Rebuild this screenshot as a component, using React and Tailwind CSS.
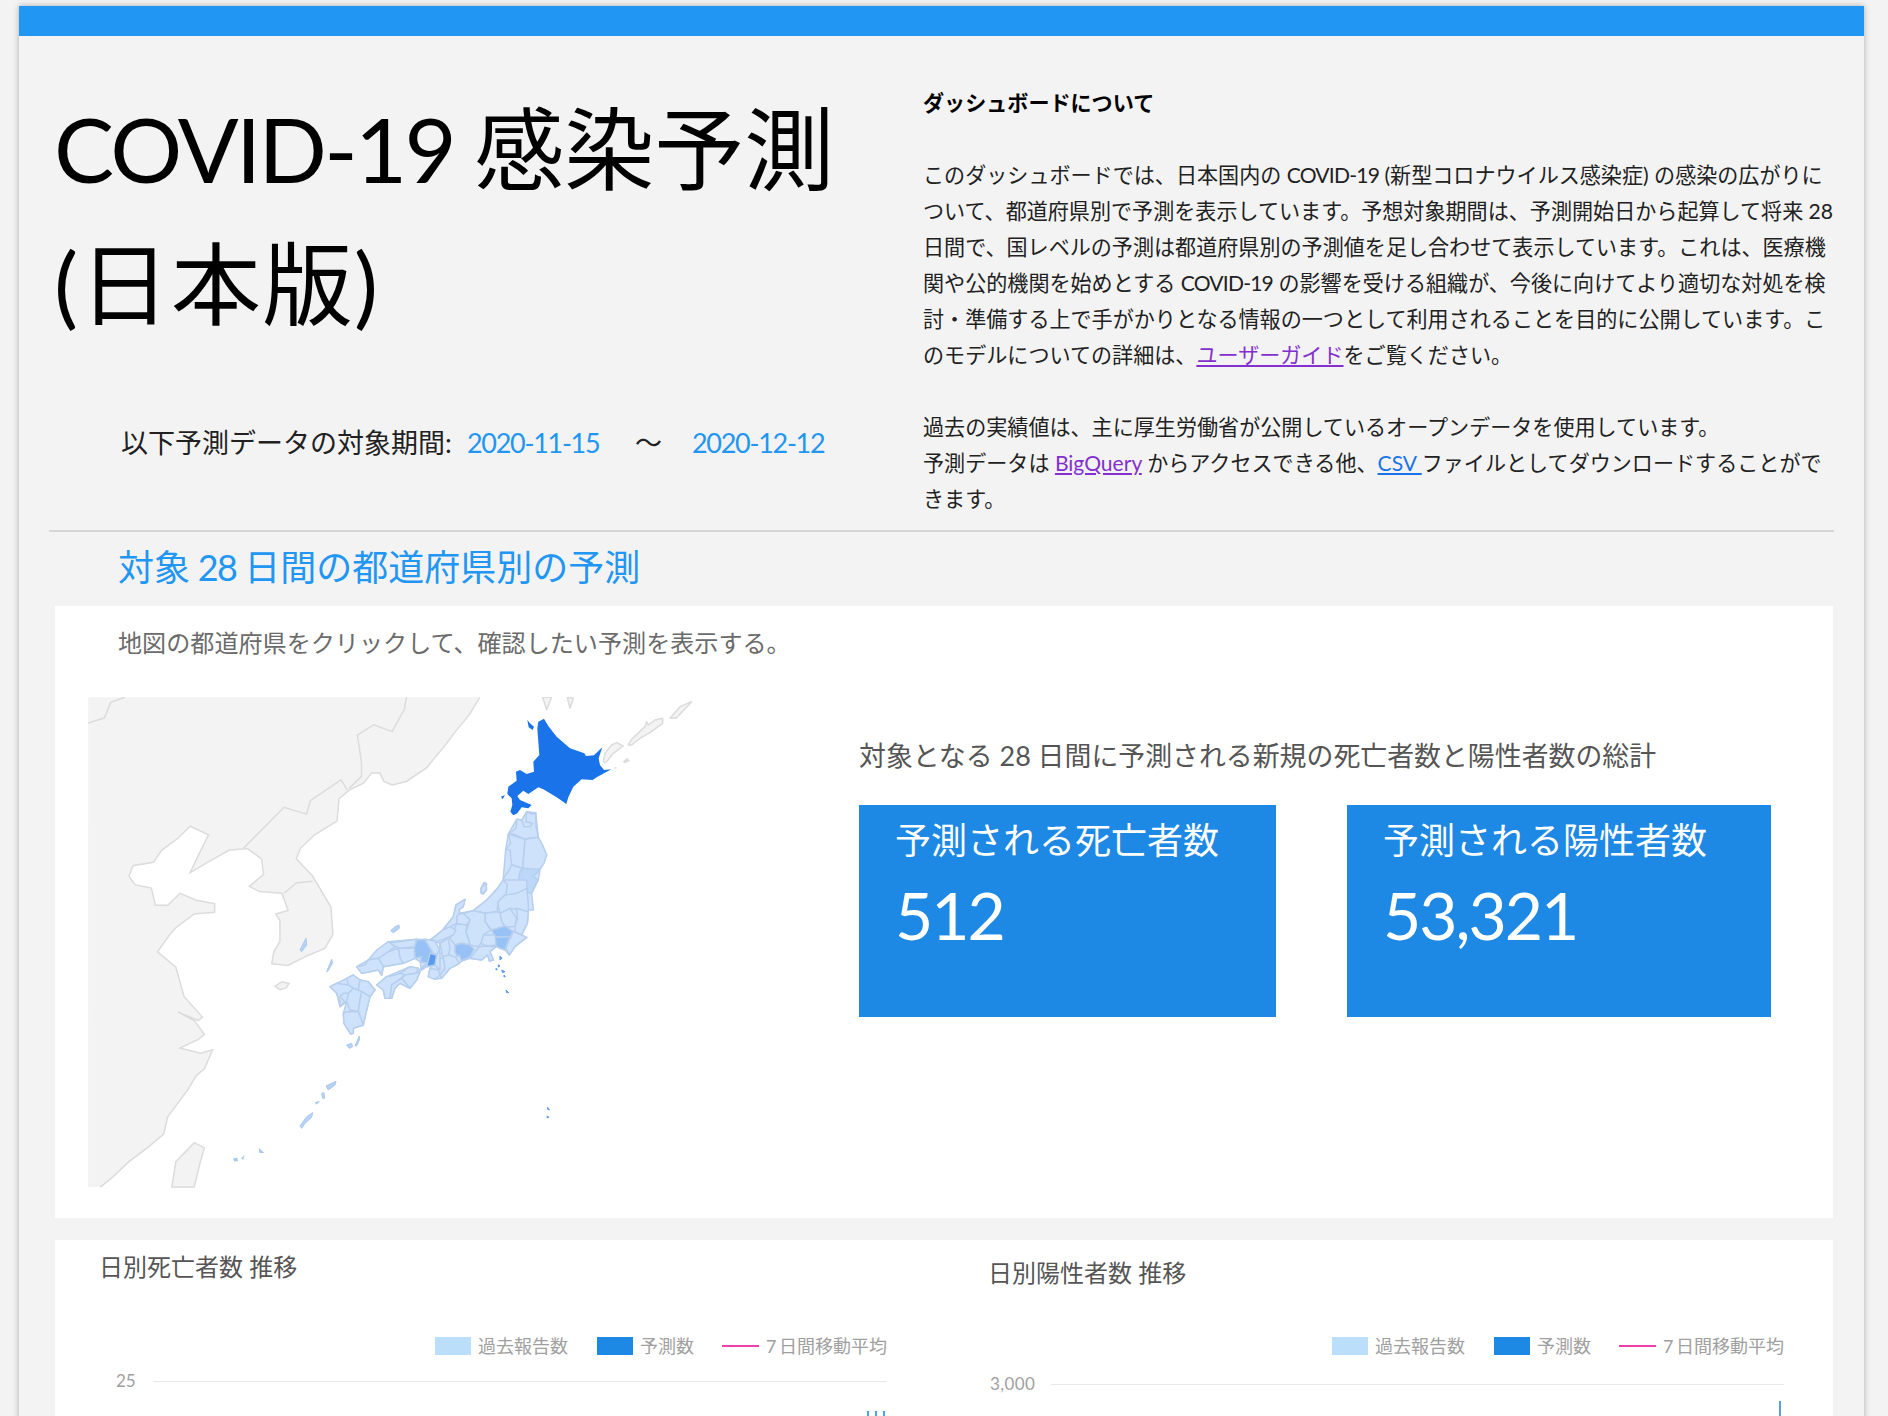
const LIGHT = "#cfe2fb";
const MID = "#98c1f5";
const SOFT = "#bcd7f7";
const DARK = "#5b9bee";

const Shape = ({ pts, fill = LIGHT, stroke = "#b7cfee", width = 1.5 }) => (
  <polygon points={pts} fill={fill} stroke={stroke} strokeWidth={width} strokeLinejoin="round" vectorEffect="non-scaling-stroke" />
);

const Line = ({ pts }) => (
  <polyline points={pts} fill="none" stroke="#dcdcdc" strokeWidth="1.5" vectorEffect="non-scaling-stroke" />
);

const tohoku = [
  ["115,72 140,28 155,30 170,5 197,8 205,82 230,135 210,178 205,210 185,250 190,300 20,300 50,285 95,240 100,205 107,118"],
  ["115,72 138,55 140,28 155,30 162,50 180,50 188,40 168,35 170,5 186,12 197,8 198,50 205,82 175,85 165,88 130,72"],
  ["115,72 165,88 162,130 158,175 125,165 120,120 107,118 122,100"],
  ["165,88 205,82 220,110 230,135 222,160 210,178 190,180 158,175 162,130"],
  ["125,165 158,175 150,185 145,215 145,245 135,255 110,240 100,205 118,180"],
  ["158,175 210,178 190,200 205,210 195,225 185,250 145,245 145,215 150,185", SOFT],
  ["42,218 50,222 45,235 50,240 40,252 32,248 34,232"],
];

const chubu = [
  ["255,0 320,0 325,100 322,130 305,165 320,172 285,200 268,225 255,210 228,200 210,215 220,240 208,243 203,225 185,240 150,235 125,243 118,250 90,265 65,295 45,298 25,290 30,265 50,240 60,190 30,180 68,150 100,110 108,75 135,58 130,80 118,88 118,100 160,92 200,60 230,28"],
  ["255,45 290,40 320,25 325,70 325,100 300,90 270,85 240,100 232,65"],
  ["250,0 262,15 258,42 234,65 232,95 195,100 160,92 200,60 230,28"],
  ["240,100 270,85 290,115 285,140 255,140 245,125"],
  ["290,85 325,95 322,130 305,165 285,155 285,140 292,115"],
  ["232,95 240,100 245,125 255,140 215,150 195,125 195,100"],
  ["215,150 255,138 280,155 270,170 225,170", MID],
  ["225,172 270,170 262,190 255,210 240,205 225,195", MID],
  ["280,155 305,165 320,172 285,200 268,225 258,205 268,180"],
  ["185,165 225,165 228,195 200,198 183,190"],
  ["150,235 178,200 200,198 228,200 210,215 220,240 208,243 203,225 185,240"],
  ["130,100 160,92 195,100 195,125 212,150 190,165 183,190 175,200 150,195 138,155 150,120"],
  ["110,105 130,100 150,120 140,135 110,132"],
  ["108,75 135,58 130,80 118,88 118,100 110,110 110,130 90,140 70,160 68,150 100,110"],
  ["110,132 140,135 138,155 150,195 125,190 105,195 90,175"],
  ["68,150 90,140 108,150 100,165 70,178 50,185 30,180 45,170"],
  ["105,195 125,190 150,195 162,208 150,230 125,243 118,225 112,230 105,215", MID],
  ["72,190 88,205 85,225 105,230 118,250 90,265 65,295 60,285 75,265 70,235"],
  ["60,190 85,175 90,205 85,225 68,230"],
  ["55,235 70,235 75,265 60,285 52,270"],
  ["30,265 55,270 60,285 45,298 25,290"],
  ["183,25 197,8 200,25 195,35 186,42"],
];

const west = [
  ["110,110 145,90 205,35 290,28 345,32 360,70 360,120 345,105 320,110 305,120 300,95 285,85 250,100 220,105 190,110 185,135 175,120 150,125 125,130"],
  ["170,165 200,140 270,110 295,115 300,125 290,150 270,175 240,160 225,175 215,205 195,205 190,180"],
  ["30,170 50,160 80,145 100,135 120,150 145,155 165,180 150,200 140,240 130,285 100,295 100,310 92,312 72,280 70,250 80,215 60,230 50,190"],
  ["290,30 315,28 325,45 340,70 325,100 300,95 305,80 285,85 282,55", MID],
  ["315,28 345,32 358,60 350,75 340,70 325,45"],
  ["300,118 320,100 305,120", SOFT],
  ["205,40 235,35 290,28 283,50 240,55 225,48"],
  ["235,55 283,55 285,85 250,100 240,85"],
  ["175,85 205,65 235,55 240,85 250,100 220,105 190,110"],
  ["145,90 170,60 205,35 225,50 205,65 175,85"],
  ["110,110 135,105 145,90 175,85 190,110 185,135 175,120 150,125 125,130"],
  ["240,130 270,110 295,115 288,130 255,135"],
  ["255,135 288,130 300,125 290,150 270,175 245,145"],
  ["170,165 200,140 225,135 240,130 255,135 215,165 210,205 195,205 190,180"],
  ["215,165 245,145 270,175 240,160 225,175 215,205 210,205"],
  ["80,145 100,135 120,150 115,180 100,175 85,165"],
  ["30,170 50,160 85,165 100,175 85,190 70,190 60,200 75,215 60,230 60,215 50,190"],
  ["120,150 145,155 165,180 150,200 125,185 115,180"],
  ["85,190 100,175 125,185 120,210 115,245 90,240 80,215"],
  ["125,185 150,200 140,240 130,285 115,245 120,210"],
  ["80,245 115,245 130,285 100,295 100,310 92,312 72,280 70,250"],
  ["330,70 350,75 345,105 320,110", DARK],
];

const smallIslands = [
  "80,275 95,238 98,248 85,272",
  "0,210 18,175 20,195 5,215",
  "165,498 178,468 178,480 170,498",
  "140,495 155,490 158,500 148,505",
  "78,618 108,604 105,615 85,630",
  "65,640 72,638 74,655 68,655",
  "45,668 58,665 50,672",
  "0,738 20,710 38,698 35,712 15,730 5,745",
  "272,152 285,140 297,135 298,145 280,158",
];

const blueDots = [
  "600,228 606,235 600,240",
  "588,265 592,268 588,270",
  "595,254 600,258 595,261",
  "605,270 615,275 608,278",
  "612,285 616,290 612,291",
  "618,330 626,338 620,338",
  "743,682 748,690 743,688",
  "741,708 747,712 742,714",
];

const Map = () => (
  <svg viewBox="88 697 610 491" className="w-[610px] h-[491px] shrink-0">
    {/* continent, taken from the wide crop */}
    <g transform="translate(80 680) scale(.408 .344)">
      <polygon
        points="20,50 980,50 955,100 920,150 895,190 870,225 850,255 800,295 765,305 745,295 735,270 715,270 695,300 660,320 635,345 630,410 575,450 540,490 530,520 570,570 615,660 620,740 600,780 560,800 510,830 470,825 475,790 490,760 490,700 480,680 510,670 495,620 440,615 415,600 450,565 445,520 410,490 365,495 320,525 270,560 290,510 315,450 270,425 240,460 200,495 180,530 130,540 120,570 135,595 175,605 185,655 215,655 245,620 285,640 330,650 330,675 280,680 235,720 220,740 190,790 235,835 255,920 300,980 290,990 240,965 280,990 305,1030 290,1045 245,1070 295,1085 325,1075 305,1130 285,1150 265,1190 215,1270 205,1320 165,1360 120,1400 80,1445 50,1474 20,1474"
        fill="#f3f3f3"
      />
      <Line pts="980,50 955,100 920,150 895,190 870,225 850,255 800,295 765,305 745,295 735,270 715,270 695,300 660,320 635,345 630,410 575,450 540,490 530,520 570,570 615,660 620,740 600,780 560,800 510,830 470,825 475,790 490,760 490,700 480,680 510,670 495,620 440,615 415,600 450,565 445,520 410,490 365,495 320,525 270,560 290,510 315,450 270,425 240,460 200,495 180,530 130,540 120,570 135,595 175,605 185,655 215,655 245,620 285,640 330,650 330,675 280,680 235,720 220,740 190,790 235,835 255,920 300,980 290,990 240,965 280,990 305,1030 290,1045 245,1070 295,1085 325,1075 305,1130 285,1150 265,1190 215,1270 205,1320 165,1360 120,1400 80,1445 50,1474" />
      <Line pts="20,125 60,110 75,65 110,50" />
      <Line pts="800,50 795,85 765,150 720,130 680,160 690,240 690,280 660,315" />
      <Line pts="400,490 500,370 555,390 565,350 640,290 655,320" />
      <Line pts="500,620 530,590 570,585" />
      <polygon points="225,1474 235,1400 280,1345 305,1360 295,1400 280,1474" fill="#f3f3f3" stroke="#dcdcdc" strokeWidth="1.5" vectorEffect="non-scaling-stroke" />
      <polygon points="478,890 495,877 512,882 505,895 490,900" fill="#f3f3f3" stroke="#dcdcdc" strokeWidth="1.5" vectorEffect="non-scaling-stroke" />
      <Shape pts="375,1392 385,1388 388,1398 378,1400" fill="#a9c8ee" stroke="none" />
      <Shape pts="395,1390 403,1380 400,1395" fill="#a9c8ee" stroke="none" />
      <Shape pts="438,1360 452,1375 440,1375" fill="#a9c8ee" stroke="none" />
    </g>

    {/* kurils, sakhalin, hokkaido */}
    <g transform="translate(400 690) scale(.3333)">
      <Shape pts="428,22 455,22 440,60" fill="#f3f3f3" stroke="#dcdcdc" />
      <Shape pts="502,22 520,25 510,55" fill="#f3f3f3" stroke="#dcdcdc" />
      <Shape pts="610,215 615,190 635,165 650,158 670,168 640,190 618,218" fill="#f3f3f3" stroke="#dcdcdc" />
      <Shape pts="685,165 695,148 735,110 740,95 745,105 765,90 788,85 788,100 750,128 720,145 695,165" fill="#f3f3f3" stroke="#dcdcdc" />
      <Shape pts="810,85 840,50 875,35 850,62 828,85" fill="#f3f3f3" stroke="#dcdcdc" />
      <Shape pts="668,215 682,203 690,213 675,220" fill="#dcdcdc" stroke="none" />
      <Shape pts="640,235 648,230 650,236" fill="#dcdcdc" stroke="none" />
      <Shape
        pts="432,86 445,108 470,140 510,175 553,190 558,198 582,196 607,172 596,205 600,225 612,240 634,238 612,250 590,262 578,270 545,268 520,290 505,322 499,342 470,322 430,298 415,292 385,312 370,302 352,318 360,330 395,345 385,355 365,352 352,370 340,376 331,365 337,345 335,325 322,312 325,290 350,272 348,245 360,240 380,252 402,245 400,215 418,195 412,115 415,95"
        fill="#1a73e8"
        stroke="none"
      />
      <Shape pts="382,90 390,100 402,110 398,120 386,112" fill="#1a73e8" stroke="none" />
      <Shape pts="303,320 315,315 308,328" fill="#1a73e8" stroke="none" />
    </g>

    <g transform="translate(470 810) scale(.3333)">
      {tohoku.map(([pts, fill]) => (
        <Shape key={pts} pts={pts} fill={fill} />
      ))}
    </g>
    <g transform="translate(420 880) scale(.3333)">
      {chubu.map(([pts, fill]) => (
        <Shape key={pts} pts={pts} fill={fill} />
      ))}
    </g>
    <g transform="translate(320 930) scale(.3333)">
      {west.map(([pts, fill]) => (
        <Shape key={pts} pts={pts} fill={fill} />
      ))}
    </g>
    <g transform="translate(300 880) scale(.3333)">
      {smallIslands.map((pts) => (
        <Shape key={pts} pts={pts} fill="#b8d3f3" stroke="#a9c8ee" width={1} />
      ))}
      {blueDots.map((pts) => (
        <Shape key={pts} pts={pts} fill="#5b9bee" stroke="#5b9bee" width={1} />
      ))}
    </g>
  </svg>
);

const Legend = () => (
  <div className="flex items-center justify-end text-[18px] leading-[18px] text-[#a0a0a0]">
    <span className="w-[36px] h-[18px] bg-[#bbdefb]"></span>
    <span className="ml-[7px]">過去報告数</span>
    <span className="ml-[29px] w-[36px] h-[18px] bg-[#1e88e5]"></span>
    <span className="ml-[7px]">予測数</span>
    <span className="ml-[28px] w-[37px] h-[2px] bg-[#f23fb0]"></span>
    <span className="ml-[7px]">
      <span className="tracking-[-1px]">7 </span>日間移動平均
    </span>
  </div>
);

const StatCard = ({ label, value, width }) => (
  <div className={`${width} h-[212px] bg-[#1e88e5] pl-[36px] pt-[11px] text-white`}>
    <div className="text-[36px] leading-[48px]">{label}</div>
    <div className="mt-[9px] text-[66px] leading-[84px] tracking-[-2px]">{value}</div>
  </div>
);

const App = () => {
  return (
    <div className="h-[1416px] overflow-hidden bg-[#f3f3f3] font-['Lato','Noto_Sans_CJK_JP',sans-serif]">
      <div className="ml-[19px] mt-[6px] w-[1845px] h-[1500px] bg-[#f3f3f3] shadow-[0_0_6px_rgba(0,0,0,0.3)]">
        <div className="h-[30px] bg-[#2196f3]"></div>

        {/* header */}
        <div className="flex h-[494px]">
          <div className="w-[904px] shrink-0 pt-[45px]">
            <h1 className="pl-[35px] text-[90px] leading-[135px] text-black whitespace-nowrap">
              <span className="tracking-[-2.7px]">COVID-19 </span>感染予測
              <br />
              <span className="tracking-[1.5px]">(日本版)</span>
            </h1>
            <div className="mt-[72px] flex pl-[102px] text-[27px] leading-[40px] whitespace-nowrap">
              <span className="w-[346px] text-[#212121]">以下予測データの対象期間:</span>
              <span className="w-[168px] text-[#2196f3] tracking-[-1.3px]">2020-11-15</span>
              <span className="w-[57px] text-[#212121]">〜</span>
              <span className="text-[#2196f3] tracking-[-1.3px]">2020-12-12</span>
            </div>
          </div>
          <div className="pt-[49px] text-[21.08px] leading-[36px] text-[#212121] whitespace-nowrap">
            <div className="font-bold text-black">ダッシュボードについて</div>
            <div className="h-[36px]"></div>
            <div>
              このダッシュボードでは、日本国内の <span className="tracking-[-0.8px]">COVID-19</span> (新型コロナウイルス感染症) の感染の広がりに
            </div>
            <div>ついて、都道府県別で予測を表示しています。予想対象期間は、予測開始日から起算して将来 28</div>
            <div>日間で、国レベルの予測は都道府県別の予測値を足し合わせて表示しています。これは、医療機</div>
            <div>
              関や公的機関を始めとする <span className="tracking-[-0.8px]">COVID-19</span> の影響を受ける組織が、今後に向けてより適切な対処を検
            </div>
            <div>討・準備する上で手がかりとなる情報の一つとして利用されることを目的に公開しています。こ</div>
            <div>
              のモデルについての詳細は、<a href="#" className="text-[#8430ce] underline">ユーザーガイド</a>をご覧ください。
            </div>
            <div className="h-[36px]"></div>
            <div>過去の実績値は、主に厚生労働省が公開しているオープンデータを使用しています。</div>
            <div>
              予測データは <a href="#" className="text-[#8430ce] underline">BigQuery</a> からアクセスできる他、
              <a href="#" className="text-[#1a73e8] underline">CSV </a>ファイルとしてダウンロードすることがで
            </div>
            <div>きます。</div>
          </div>
        </div>

        <div className="ml-[30px] w-[1785px] h-[2px] bg-[#d6d6d6]"></div>

        <h2 className="h-[74px] pl-[99px] text-[36px] leading-[70px] text-[#2196f3]">
          対象<span className="tracking-[-1.5px]"> 28 </span>日間の都道府県別の予測
        </h2>

        {/* map card */}
        <div className="ml-[36px] w-[1778px] h-[612px] bg-white pt-[19px]">
          <p className="pl-[63px] text-[24.1px] leading-[36px] text-[#6b6b6b]">
            地図の都道府県をクリックして、確認したい予測を表示する。
          </p>
          <div className="mt-[36px] ml-[33px] flex">
            <Map />
            <div className="ml-[161px] pt-[41px]">
              <div className="text-[26.9px] leading-[36px] text-[#555]">
                対象となる 28 日間に予測される新規の死亡者数と陽性者数の総計
              </div>
              <div className="mt-[31px] flex gap-[71px]">
                <StatCard label="予測される死亡者数" value="512" width="w-[417px]" />
                <StatCard label="予測される陽性者数" value="53,321" width="w-[424px]" />
              </div>
            </div>
          </div>
        </div>

        {/* charts */}
        <div className="ml-[36px] mt-[22px] w-[1778px] h-[300px] bg-white flex">
          <div className="w-[832px] shrink-0 pt-[9px]">
            <div className="pl-[44px] text-[24px] leading-[36px] text-[#555]">日別死亡者数 推移</div>
            <div className="mt-[52px]">
              <Legend />
            </div>
            <div className="mt-[16px] flex items-center pl-[61px] text-[17px] leading-[20px] text-[#a0a0a0]">
              <span className="w-[37px]">25</span>
              <span className="flex-1 h-[1px] bg-[#e8e8e8]"></span>
            </div>
            <div className="mt-[20px] flex justify-end gap-[6px] pr-[2px]">
              <span className="w-[2px] h-[20px] bg-[#42a5f5]"></span>
              <span className="w-[2px] h-[20px] bg-[#42a5f5]"></span>
              <span className="w-[2px] h-[20px] bg-[#42a5f5]"></span>
            </div>
          </div>
          <div className="w-[897px] shrink-0 pt-[15px]">
            <div className="pl-[101px] text-[24px] leading-[36px] text-[#555]">日別陽性者数 推移</div>
            <div className="mt-[46px]">
              <Legend />
            </div>
            <div className="mt-[19px] flex items-center pl-[103px] text-[17px] leading-[20px] text-[#a0a0a0]">
              <span className="w-[61px] tracking-[0.4px]">3,000</span>
              <span className="flex-1 h-[1px] bg-[#e8e8e8]"></span>
            </div>
            <div className="mt-[7px] flex justify-end pr-[3px]">
              <span className="w-[2px] h-[30px] bg-[#5b9de0]"></span>
            </div>
          </div>
        </div>
      </div>
    </div>
  );
};

export default App;
